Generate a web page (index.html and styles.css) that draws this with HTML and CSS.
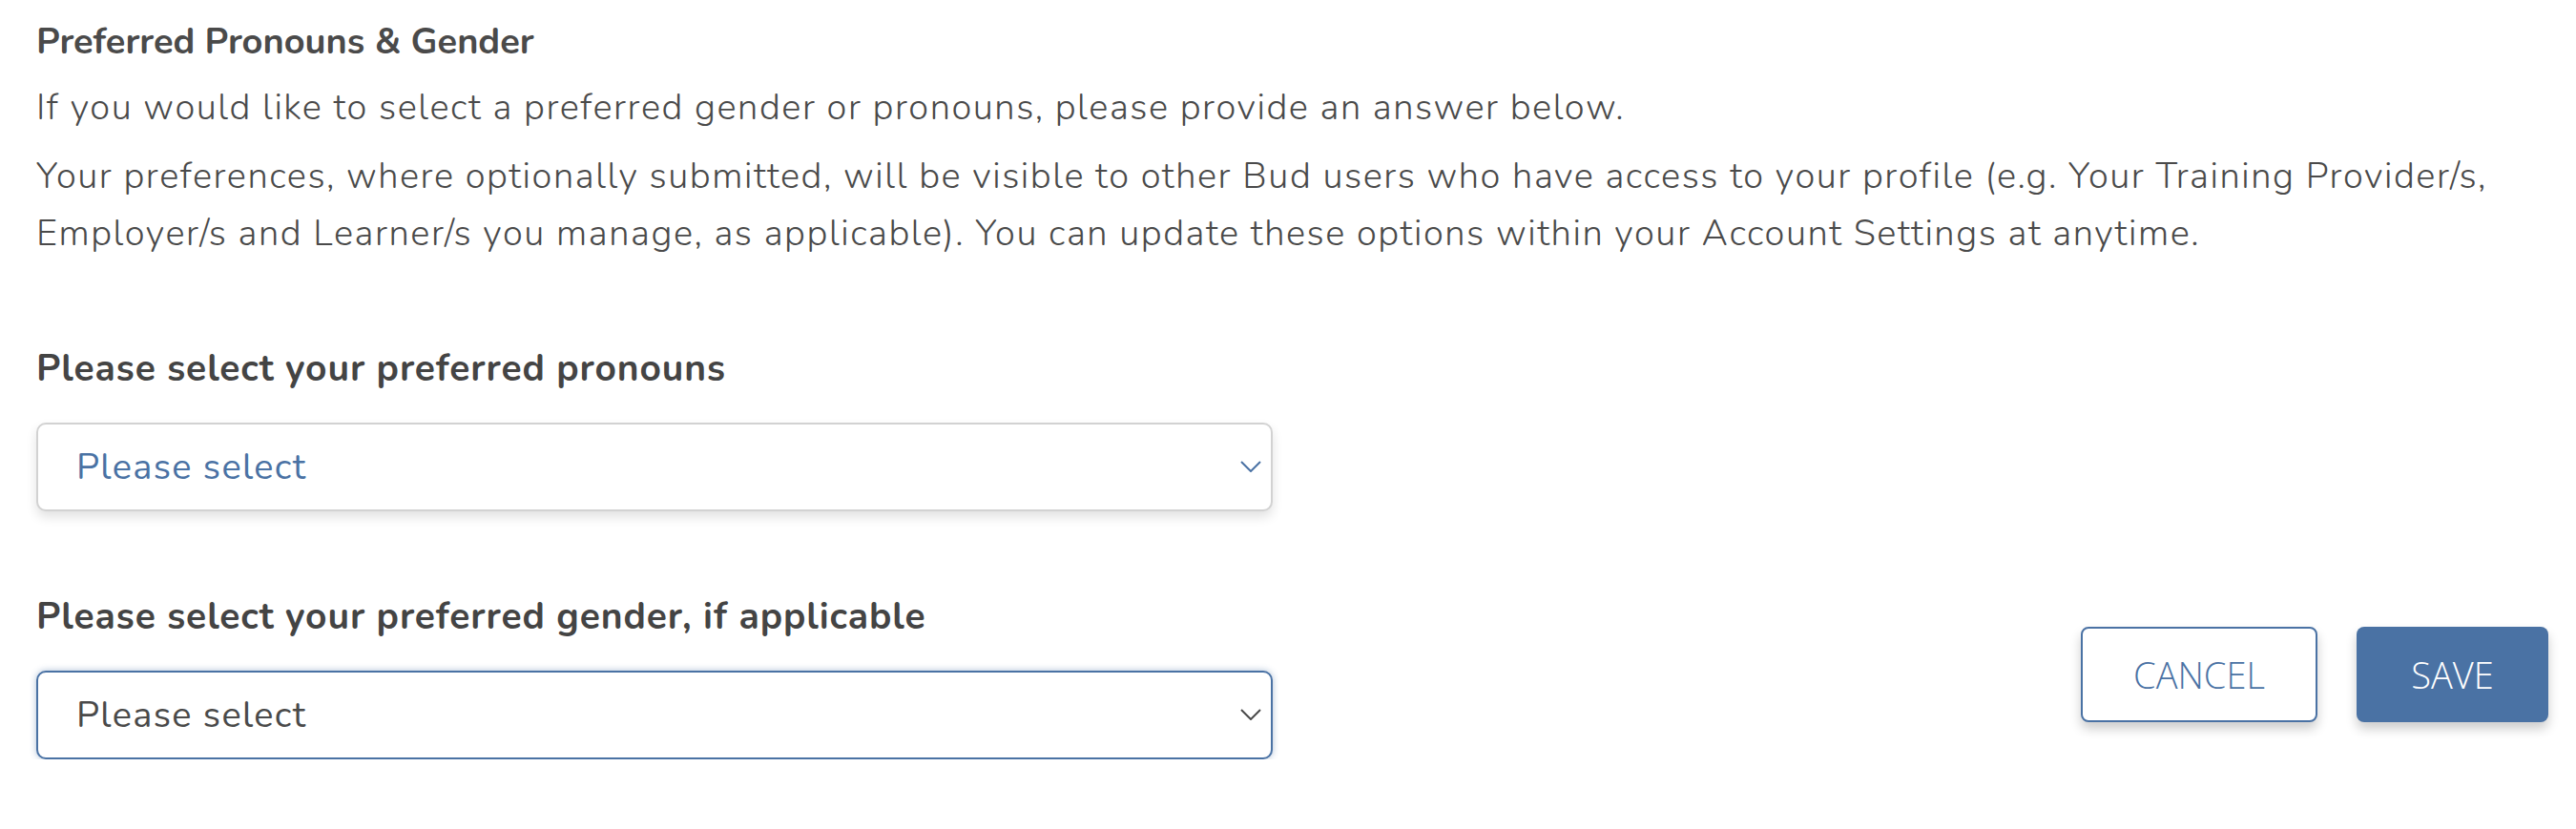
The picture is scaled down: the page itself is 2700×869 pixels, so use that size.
FILE: index.html
```html
<!DOCTYPE html>
<html lang="en">
<head>
  <meta charset="UTF-8">
  <meta name="viewport" content="width=device-width, initial-scale=1.0">
  <title>Preferred Pronouns &amp; Gender</title>
  <link rel="stylesheet" href="styles.css">
</head>
<body>
  <div class="page">
    <h2 class="title">Preferred Pronouns &amp; Gender</h2>
    <p class="intro">If you would like to select a preferred gender or pronouns, please provide an answer below.</p>
    <p class="intro">Your preferences, where optionally submitted, will be visible to other Bud users who have access to your profile (e.g. Your Training Provider/s,<br>Employer/s and Learner/s you manage, as applicable). You can update these options within your Account Settings at anytime.</p>

    <div class="form-row">
      <div class="fields">
        <label class="field-label" for="pronouns">Please select your preferred pronouns</label>
        <div class="select-wrap">
          <select id="pronouns" class="select select-blue">
            <option value="">Please select</option>
            <option value="she">She / Her</option>
            <option value="he">He / Him</option>
            <option value="they">They / Them</option>
          </select>
          <svg class="chevron chevron-blue" width="22" height="12" viewBox="0 0 22 12"><path d="M1 1 L11 11 L21 1" fill="none" stroke="currentColor" stroke-width="2"/></svg>
        </div>

        <label class="field-label" for="gender">Please select your preferred gender, if applicable</label>
        <div class="select-wrap">
          <select id="gender" class="select select-focus">
            <option value="">Please select</option>
            <option value="female">Female</option>
            <option value="male">Male</option>
            <option value="nonbinary">Non-binary</option>
          </select>
          <svg class="chevron" width="22" height="12" viewBox="0 0 22 12"><path d="M1 1 L11 11 L21 1" fill="none" stroke="currentColor" stroke-width="2"/></svg>
        </div>
      </div>

      <div class="actions">
        <button class="btn btn-outline" type="button">CANCEL</button>
        <button class="btn btn-primary" type="button">SAVE</button>
      </div>
    </div>
  </div>
</body>
</html>
```

FILE: styles.css
```css
body {
  margin: 0;
  background: #fff;
  font-family: Nunito, Lato, "Open Sans", sans-serif;
  color: #4a4a4a;
}
.page {
  padding: 14px 29px 0 38px;
}
.title {
  margin: 0;
  font-size: 38px;
  font-weight: 700;
  line-height: 60px;
}
.intro {
  margin: 9px 0 0;
  font-size: 38px;
  font-weight: 300;
  line-height: 60px;
  letter-spacing: 1.55px;
}
.intro + .intro {
  margin-top: 12px;
}
.form-row {
  display: flex;
  align-items: flex-end;
}
.fields {
  width: 1296px;
}
.field-label {
  display: block;
  margin: 82px 0 26px;
  font-size: 39px;
  font-weight: 700;
  line-height: 60px;
  letter-spacing: 0.9px;
  color: #444;
}
.select-wrap + .field-label {
  margin-top: 81px;
}
.select-wrap {
  position: relative;
}
.select {
  display: block;
  width: 100%;
  height: 93px;
  padding: 0 60px 0 40px;
  -webkit-appearance: none;
  appearance: none;
  background: #fff;
  border: 2px solid #d2d2d2;
  border-radius: 10px;
  font-family: inherit;
  font-size: 38px;
  letter-spacing: 1.3px;
  color: #4a4a4a;
  box-shadow: 0 6px 12px rgba(0,0,0,0.12);
  outline: none;
}
.select-blue {
  color: #4a72a4;
}
.select-focus {
  border-color: #4a72a4;
  box-shadow: 0 0 7px rgba(74,114,164,0.45);
}
.chevron {
  position: absolute;
  right: 12px;
  top: 40px;
  color: #4a4a4a;
  pointer-events: none;
}
.chevron-blue {
  color: #4a72a4;
}
.actions {
  display: flex;
  gap: 41px;
  margin-left: auto;
  margin-bottom: 39px;
}
.btn {
  height: 100px;
  border-radius: 8px;
  font-family: "Open Sans", sans-serif;
  font-size: 38px;
  font-weight: 300;
  box-shadow: 0 7px 12px rgba(0,0,0,0.2);
  cursor: pointer;
}
.btn-outline {
  width: 248px;
  background: #fff;
  border: 2px solid #4a72a4;
  color: #4a72a4;
}
.btn-primary {
  width: 201px;
  background: #4a72a4;
  border: 0;
  color: #fff;
}
```
